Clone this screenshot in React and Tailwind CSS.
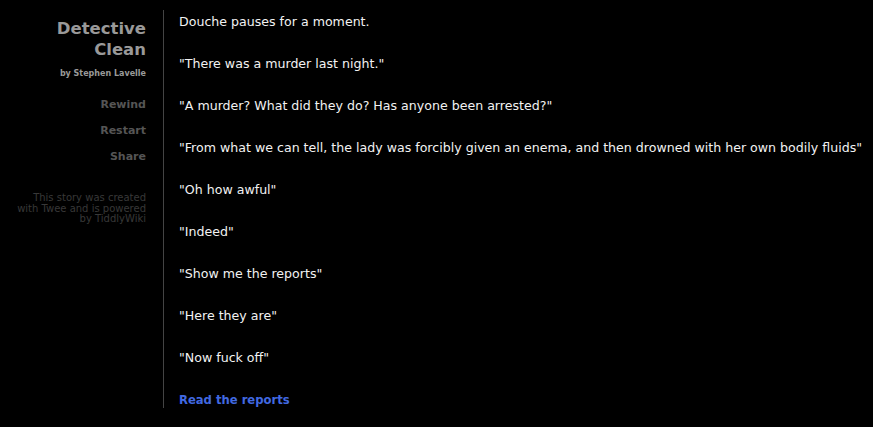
export default function App() {
  const paras = [
    'Douche pauses for a moment.',
    '"There was a murder last night."',
    '"A murder? What did they do? Has anyone been arrested?"',
    '"From what we can tell, the lady was forcibly given an enema, and then drowned with her own bodily fluids"',
    '"Oh how awful"',
    '"Indeed"',
    '"Show me the reports"',
    '"Here they are"',
    '"Now fuck off"',
  ];
  return (
    <div className="w-[873px] h-[427px] bg-black overflow-hidden flex font-['DejaVu_Sans',sans-serif]">
      <div className="w-[146px] shrink-0 flex flex-col items-end text-right pt-[18px]">
        <div className="text-[16.5px] leading-[21px] font-bold text-[#999999]">
          Detective<br />Clean
        </div>
        <div className="mt-[9px] text-[8px] leading-[10px] font-bold text-[#999999]">by Stephen Lavelle</div>
        <div className="mt-[19px] flex flex-col gap-[12px] text-[11px] leading-[14px] font-bold text-[#555555]">
          <span>Rewind</span>
          <span>Restart</span>
          <span>Share</span>
        </div>
        <div className="mt-[29px] text-[10px] leading-[10.5px] text-[#383838]">
          This story was created<br />with Twee and is powered<br />by TiddlyWiki
        </div>
      </div>
      <div className="ml-[17px] mt-[10px] h-[398px] w-px bg-[#444444] shrink-0" />
      <div className="ml-[15px] pt-[13px] flex flex-col gap-[24px] text-[12.6px] leading-[18px] text-[#f2f2f2] whitespace-nowrap">
        {paras.map((p, i) => (
          <p key={i}>{p}</p>
        ))}
        <p className="font-bold text-[11.6px] text-[#4169e1]">Read the reports</p>
      </div>
    </div>
  );
}
